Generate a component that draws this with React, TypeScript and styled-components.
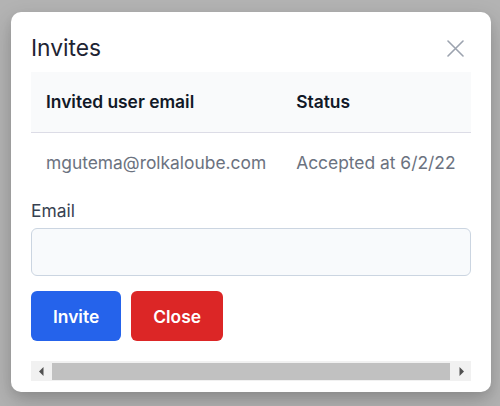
import React from "react";
import styled, { createGlobalStyle } from "styled-components";

const Global = createGlobalStyle`
  html, body { margin: 0; padding: 0; }
  body {
    background: #b3b3b3;
    font-family: Inter, "Noto Sans", sans-serif;
    width: 500px;
    height: 406px;
    overflow: hidden;
  }
`;

const Backdrop = styled.div`
  width: 500px;
  height: 406px;
  padding: 12px 9px 0 11px;
  box-sizing: border-box;
`;

const Modal = styled.div`
  width: 480px;
  height: 380px;
  box-sizing: border-box;
  background: #ffffff;
  border-radius: 10px;
  box-shadow: 0 10px 25px rgba(0, 0, 0, 0.18), 0 4px 10px rgba(0, 0, 0, 0.08);
  padding: 20px 20px 0 20px;
  display: flex;
  flex-direction: column;
`;

const Header = styled.div`
  display: flex;
  align-items: center;
  justify-content: space-between;
  height: 32px;
  margin-bottom: 8px;
`;

const Title = styled.h2`
  margin: 0;
  font-size: 22.8px;
  line-height: 32px;
  font-weight: 400;
  color: #1e2433;
`;

const CloseIcon = styled.button`
  border: none;
  background: none;
  padding: 0;
  margin-right: 7px;
  width: 17px;
  height: 17px;
  display: flex;
  cursor: pointer;
`;

const Scroller = styled.div`
  overflow: hidden;
  padding-bottom: 20px;
`;

const Table = styled.table`
  border-collapse: collapse;
  font-size: 17.4px;
  line-height: 28px;
  white-space: nowrap;
`;

const Th = styled.th`
  text-align: left;
  font-weight: 600;
  color: #111827;
  background: #f9fafb;
  padding: 16px 15px;
  border-bottom: 1px solid #dcdce6;
`;

const Td = styled.td`
  color: #6b7280;
  padding: 16px 15px;
`;

const Label = styled.label`
  display: block;
  margin-top: 4px;
  font-size: 17.4px;
  line-height: 27px;
  color: #374151;
  margin-bottom: 4px;
`;

const Input = styled.input`
  display: block;
  width: 440px;
  height: 48px;
  box-sizing: border-box;
  border: 1px solid #cbd5e1;
  border-radius: 6px;
  background: #f8fafc;
  font-size: 17.4px;
  font-family: inherit;
  padding: 0 12px;
  outline: none;
`;

const Actions = styled.div`
  display: flex;
  gap: 10px;
  margin-top: 15px;
`;

const Button = styled.button<{ $variant: "primary" | "danger" }>`
  height: 50px;
  padding: 0 22px;
  border: none;
  border-radius: 6px;
  font-family: inherit;
  font-size: 17.4px;
  font-weight: 600;
  color: #ffffff;
  background: ${(p) => (p.$variant === "primary" ? "#2563eb" : "#dc2626")};
  cursor: pointer;
`;

const ScrollTrack = styled.div`
  display: flex;
  align-items: stretch;
  height: 20px;
  width: 440px;
  background: #f1f1f1;
`;

const ScrollArrow = styled.div`
  width: 20px;
  display: flex;
  align-items: center;
  justify-content: center;
`;

const ScrollThumb = styled.div`
  flex: 1;
  margin: 2px 1px 1px;
  background: #c1c1c1;
`;

export default function App() {
  return (
    <>
      <Global />
      <Backdrop>
        <Modal>
          <Header>
            <Title>Invites</Title>
            <CloseIcon aria-label="Close">
              <svg width="17" height="17" viewBox="0 0 17 17" fill="none">
                <path d="M1 1L16 16M16 1L1 16" stroke="#9ca3af" strokeWidth="1.6" strokeLinecap="round" />
              </svg>
            </CloseIcon>
          </Header>
          <Scroller>
            <Table>
              <thead>
                <tr>
                  <Th>Invited user email</Th>
                  <Th>Status</Th>
                </tr>
              </thead>
              <tbody>
                <tr>
                  <Td>mgutema@rolkaloube.com</Td>
                  <Td>Accepted at 6/2/22</Td>
                </tr>
              </tbody>
            </Table>
            <Label htmlFor="email">Email</Label>
            <Input id="email" type="email" />
            <Actions>
              <Button $variant="primary">Invite</Button>
              <Button $variant="danger">Close</Button>
            </Actions>
          </Scroller>
          <ScrollTrack>
            <ScrollArrow>
              <svg width="5" height="9" viewBox="0 0 5 9">
                <path d="M4.5 0L0 4.5L4.5 9Z" fill="#505050" />
              </svg>
            </ScrollArrow>
            <ScrollThumb />
            <ScrollArrow>
              <svg width="5" height="9" viewBox="0 0 5 9">
                <path d="M0.5 0L5 4.5L0.5 9Z" fill="#505050" />
              </svg>
            </ScrollArrow>
          </ScrollTrack>
        </Modal>
      </Backdrop>
    </>
  );
}
